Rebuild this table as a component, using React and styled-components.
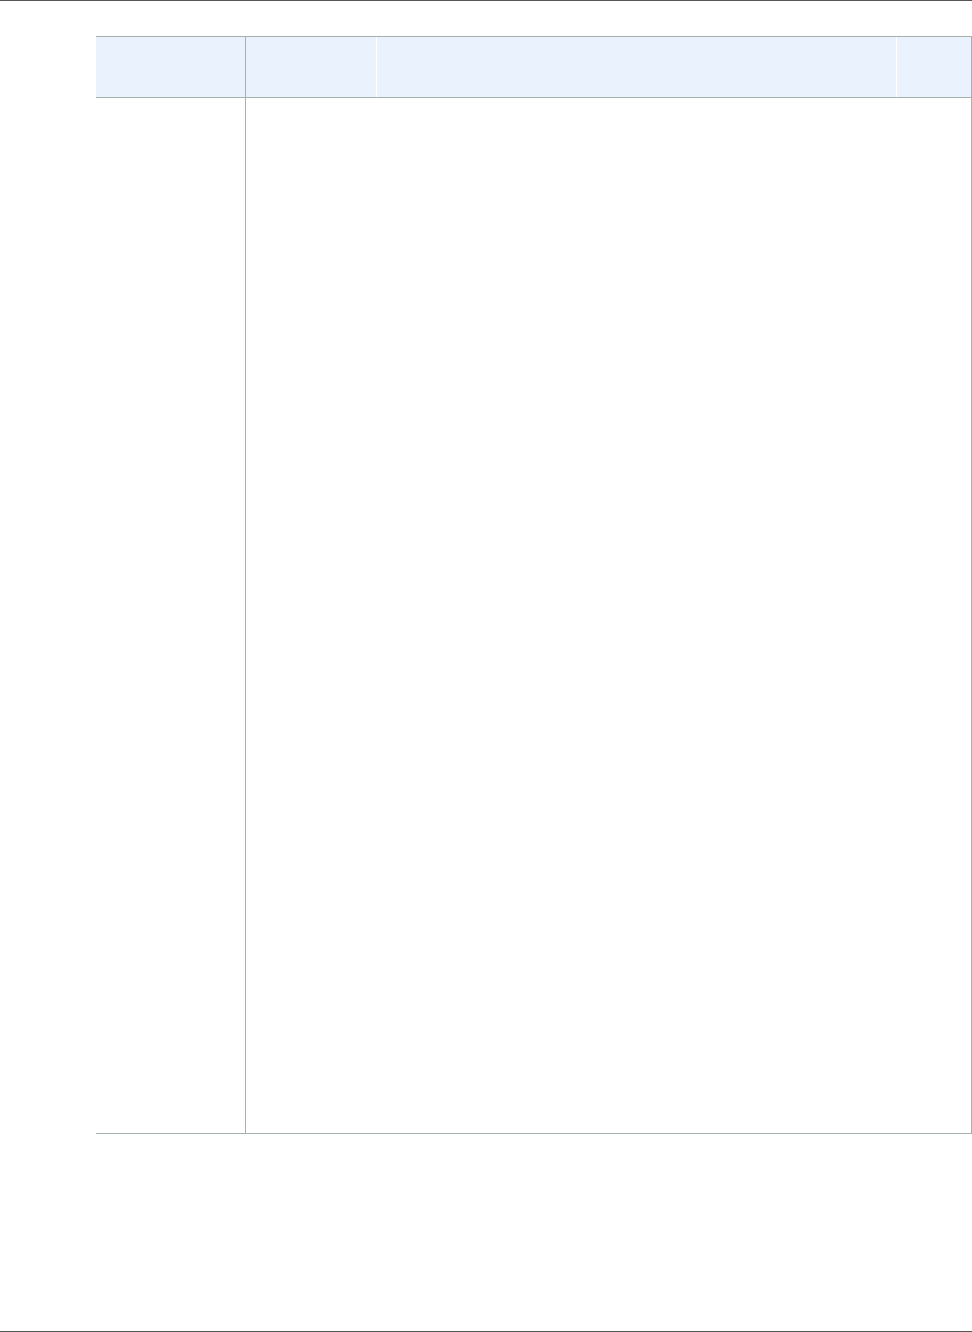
import React from 'react'
import styled, { createGlobalStyle } from 'styled-components'

const GlobalStyle = createGlobalStyle`
    html, body {
        margin: 0;
        padding: 0;
        background: #fff;
        font-family: "Liberation Sans", Arial, sans-serif;
    }
`

const columns = [
    { width: 150, line: '#a5b1ae' },
    { width: 131, line: '#ffffff' },
    { width: 520, line: '#ffffff' },
    { width: 74, line: 'transparent' },
]

const App = () => {
    return (
        <Page>
            <GlobalStyle />
            <Rule />
            <Content>
                <Table>
                    <HeadRow>
                        {columns.map((c, i) => (
                            <HeadCell key={i} $line={c.line} />
                        ))}
                    </HeadRow>
                    <BodyRow>
                        <BodyCell $first />
                        <BodyCell />
                    </BodyRow>
                </Table>
            </Content>
            <Rule />
        </Page>
    )
}

export default App

const Page = styled.div`
    height: 1332px;
    display: flex;
    flex-direction: column;
`

const Rule = styled.div`
    height: 1px;
    background: #555555;
    flex-shrink: 0;
`

const Content = styled.div`
    flex: 1;
    padding: 35px 0 0 96px;
`

const Table = styled.div`
    width: 876px;
    box-sizing: border-box;
    border-top: 1px solid #a5b1ae;
    border-right: 1px solid #a5b1ae;
    border-bottom: 1px solid #a5b1ae;
`

const HeadRow = styled.div`
    display: grid;
    grid-template-columns: ${columns.map(c => c.width + 'px').join(' ')};
    height: 61px;
    box-sizing: border-box;
    background: #eaf2fd;
    border-bottom: 1px solid #a5b1ae;
`

const HeadCell = styled.div`
    border-right: 1px solid ${p => p.$line};
`

const BodyRow = styled.div`
    display: grid;
    grid-template-columns: 150px 1fr;
    height: 1035px;
`

const BodyCell = styled.div`
    border-right: ${p => (p.$first ? '1px solid #a5b1ae' : 'none')};
`
